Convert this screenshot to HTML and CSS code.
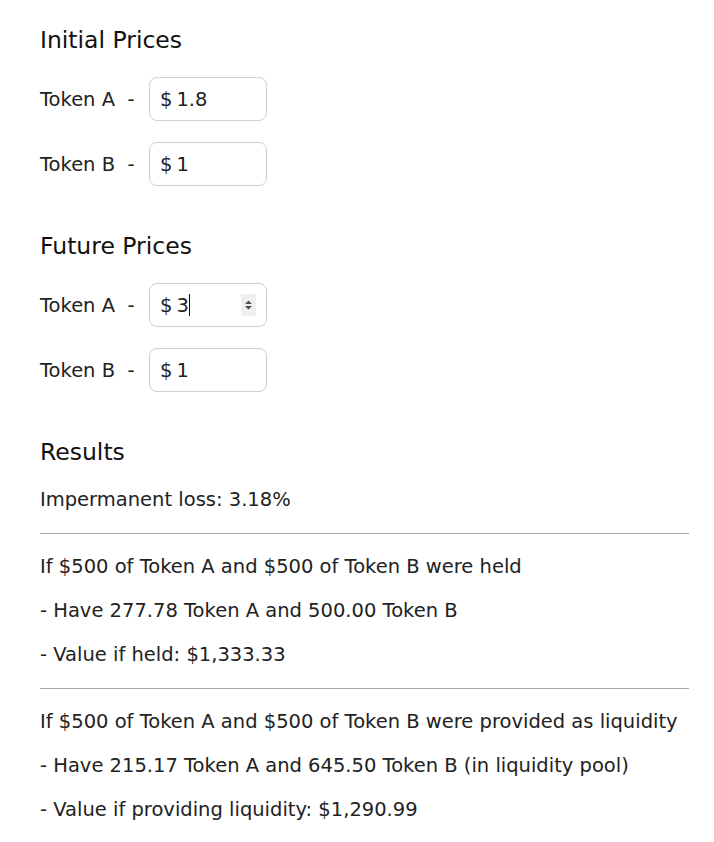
FILE: index.html
```html
<!DOCTYPE html>
<html lang="en">
<head>
    <meta charset="UTF-8">
    <meta name="viewport" content="width=device-width, initial-scale=1.0">
    <title>Impermanent Loss Calculator</title>
    <link rel="stylesheet" href="styles.css">
</head>
<body>

<div class="container">
    <h3>Initial Prices</h3>
    <div class="price-row">
        <label for="initialA">Token A&nbsp; -</label>
        <div class="price-box"><span class="dollar">$</span><input type="text" id="initialA" value="1.8"></div>
    </div>
    <div class="price-row">
        <label for="initialB">Token B&nbsp; -</label>
        <div class="price-box"><span class="dollar">$</span><input type="text" id="initialB" value="1"></div>
    </div>

    <h3 class="section-gap">Future Prices</h3>
    <div class="price-row">
        <label for="futureA">Token A&nbsp; -</label>
        <div class="price-box active">
            <span class="dollar">$</span><input type="text" id="futureA" value="3"><span class="caret"></span>
            <span class="spinner">
                <svg width="9" height="12" viewBox="0 0 9 12"><path d="M1 5 L4.5 1.5 L8 5 Z M1 7 L4.5 10.5 L8 7 Z" fill="#505050"/></svg>
            </span>
        </div>
    </div>
    <div class="price-row">
        <label for="futureB">Token B&nbsp; -</label>
        <div class="price-box"><span class="dollar">$</span><input type="text" id="futureB" value="1"></div>
    </div>

    <h3 class="section-gap">Results</h3>
    <div class="results">
        <p>Impermanent loss: 3.18%</p>
        <hr>
        <p>If $500 of Token A and $500 of Token B were held</p>
        <p>- Have 277.78 Token A and 500.00 Token B</p>
        <p>- Value if held: $1,333.33</p>
        <hr>
        <p>If $500 of Token A and $500 of Token B were provided as liquidity</p>
        <p>- Have 215.17 Token A and 645.50 Token B (in liquidity pool)</p>
        <p>- Value if providing liquidity: $1,290.99</p>
    </div>
</div>

</body>
</html>
```

FILE: styles.css
```css
* {
    box-sizing: border-box;
    margin: 0;
    padding: 0;
}

body {
    font-family: 'DejaVu Sans', sans-serif;
    background-color: #fff;
    color: #222;
    padding: 24px 20px 0 40px;
}

.container {
    width: 649px;
}

h3 {
    font-size: 23.5px;
    font-weight: 500;
    color: #111;
    line-height: 32px;
    margin-bottom: 21px;
}

.section-gap {
    margin-top: 44px;
}

.price-row {
    display: flex;
    align-items: center;
    height: 44px;
    margin-bottom: 21px;
    font-size: 19.5px;
}

.price-row label {
    width: 109px;
}

.price-box {
    display: flex;
    align-items: center;
    width: 118px;
    height: 44px;
    border: 1px solid #cfcfcf;
    border-radius: 8px;
    padding: 0 10px;
    position: relative;
}

.dollar {
    margin-right: 4px;
}

.price-box input {
    border: none;
    outline: none;
    font: inherit;
    color: inherit;
    width: 60px;
    background: transparent;
}

.price-box.active input {
    flex: none;
    width: 13px;
}

.caret {
    width: 1px;
    height: 22px;
    background: #111;
}

.spinner {
    position: absolute;
    right: 10px;
    top: 10px;
    width: 15px;
    height: 22px;
    background: #efefef;
    display: flex;
    align-items: center;
    justify-content: center;
}

.results p {
    font-size: 19.5px;
    line-height: 22px;
    margin-bottom: 22px;
}

.results hr {
    border: none;
    border-top: 1px solid #a8a8a8;
    margin: 0 0 22px;
}
```
